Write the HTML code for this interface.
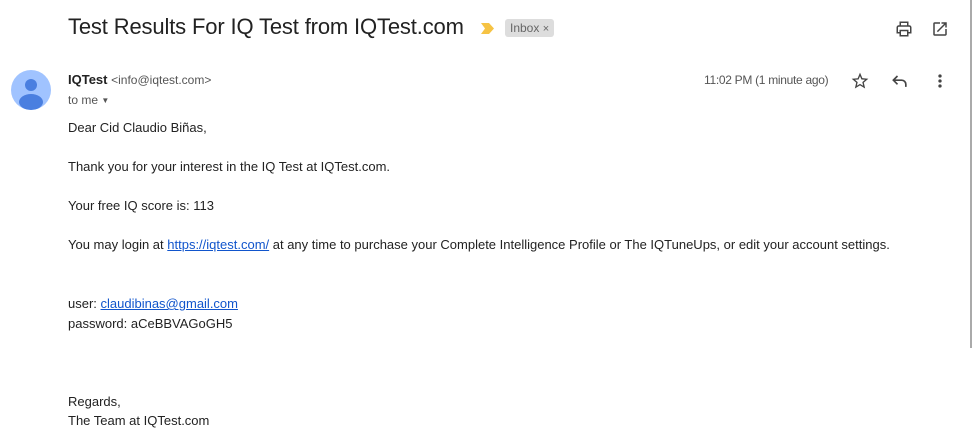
<!DOCTYPE html>
<html><head><meta charset="utf-8"><style>
body{margin:0;width:972px;height:445px;background:#fff;font-family:"Liberation Sans",Arial,sans-serif;position:relative;overflow:hidden;color:#222}
.a{position:absolute;white-space:nowrap}
.b{font-size:13px;color:#222;left:68px}
a{color:#15c;text-decoration:underline}
</style></head><body>
<div style="position:absolute;left:970px;top:0;width:2px;height:348px;background:#aaa"></div>
<div class="a" style="left:68px;top:14px;font-size:22px;color:#222;letter-spacing:-0.15px">Test Results For IQ Test from IQTest.com</div>
<svg class="a" style="left:481px;top:23px" width="14" height="11" viewBox="0 0 14 11"><path d="M0 0h8l5 5.5-5 5.5H0l4-5.5z" fill="#f6c344"/></svg>
<div class="a" style="left:505px;top:19px;height:18px;line-height:18px;padding:0 5px;background:#ddd;border-radius:3px;font-size:12px;color:#666">Inbox <span style="font-size:11px">×</span></div>
<svg class="a" style="left:895px;top:20px" width="18" height="18" viewBox="0 0 24 24"><path d="M7 8V3h10v5M6 17H3v-7a2 2 0 0 1 2-2h14a2 2 0 0 1 2 2v7h-3M7 14h10v7H7z" fill="none" stroke="#444" stroke-width="2"/></svg>
<svg class="a" style="left:931px;top:20px" width="18" height="18" viewBox="0 0 24 24"><path d="M19 19H5V5h7V3H5a2 2 0 0 0-2 2v14a2 2 0 0 0 2 2h14c1.1 0 2-.9 2-2v-7h-2v7zM14 3v2h3.6l-9.8 9.8 1.4 1.4L19 6.4V10h2V3h-7z" fill="#444"/></svg>
<svg class="a" style="left:11px;top:70px" width="40" height="40" viewBox="0 0 40 40"><clipPath id="c"><circle cx="20" cy="20" r="20"/></clipPath><circle cx="20" cy="20" r="20" fill="#a0c3ff"/><circle cx="20" cy="15" r="6" fill="#4a7fe0"/><ellipse cx="20" cy="32" rx="12" ry="8" fill="#4a7fe0" clip-path="url(#c)"/></svg>
<div class="a" style="left:68px;top:72px;font-size:13px"><b style="color:#222">IQTest</b> <span style="font-size:12px;color:#555">&lt;info@iqtest.com&gt;</span></div>
<div class="a" style="left:68px;top:93px;font-size:12px;color:#555">to me <span style="font-size:8px;position:relative;top:-1px">▼</span></div>
<div class="a" style="left:704px;top:73px;font-size:12px;color:#555;letter-spacing:-0.3px">11:02 PM (1 minute ago)</div>
<svg class="a" style="left:850px;top:71px" width="20" height="20" viewBox="0 0 24 24"><path d="M22 9.24l-7.19-.62L12 2 9.19 8.63 2 9.24l5.46 4.73L5.82 21 12 17.27 18.18 21l-1.63-7.03L22 9.24zM12 15.4l-3.76 2.27 1-4.28-3.32-2.88 4.38-.38L12 6.1l1.71 4.04 4.38.38-3.32 2.88 1 4.28L12 15.4z" fill="#444"/></svg>
<svg class="a" style="left:890px;top:71px" width="20" height="20" viewBox="0 0 24 24"><path d="M9 6L4 11l5 5M4 11h10a5 5 0 0 1 5 5v3" fill="none" stroke="#444" stroke-width="2"/></svg>
<svg class="a" style="left:930px;top:71px" width="20" height="20" viewBox="0 0 24 24"><circle cx="12" cy="6" r="2" fill="#444"/><circle cx="12" cy="12" r="2" fill="#444"/><circle cx="12" cy="18" r="2" fill="#444"/></svg>
<div class="a b" style="top:120px">Dear Cid Claudio Biñas,</div>
<div class="a b" style="top:159px">Thank you for your interest in the IQ Test at IQTest.com.</div>
<div class="a b" style="top:198px">Your free IQ score is: 113</div>
<div class="a b" style="top:237px">You may login at <a>https://iqtest.com/</a> at any time to purchase your Complete Intelligence Profile or The IQTuneUps, or edit your account settings.</div>
<div class="a b" style="top:296px">user: <a>claudibinas@gmail.com</a></div>
<div class="a b" style="top:316px">password: aCeBBVAGoGH5</div>
<div class="a b" style="top:394px">Regards,</div>
<div class="a b" style="top:413px">The Team at IQTest.com</div>
</body></html>
